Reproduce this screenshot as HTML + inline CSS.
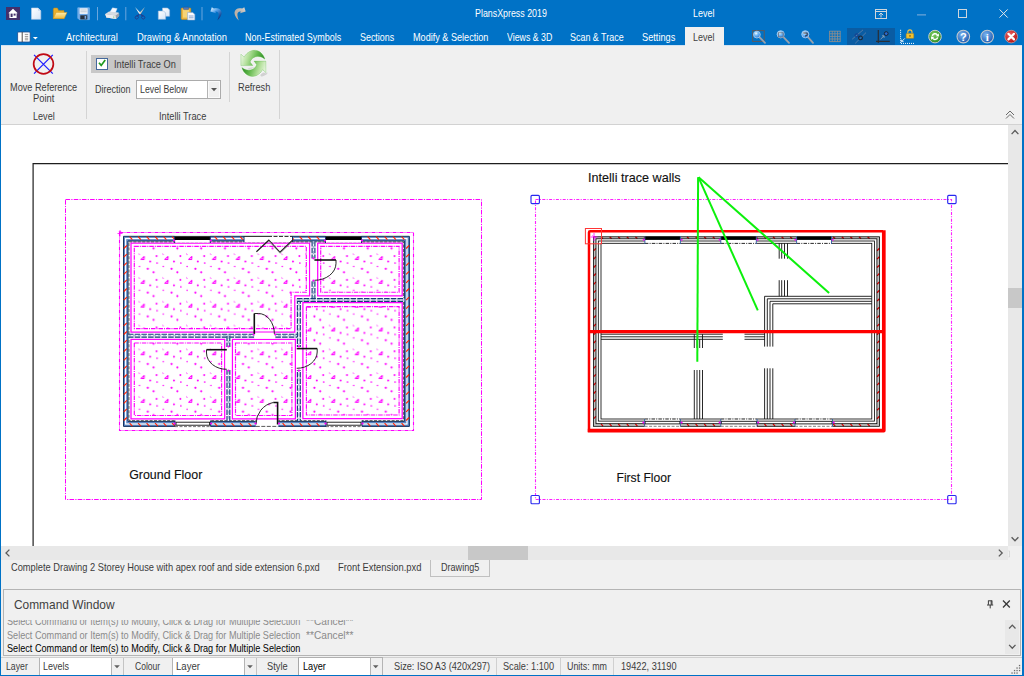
<!DOCTYPE html>
<html><head><meta charset="utf-8"><title>PlansXpress 2019</title>
<style>
html,body{margin:0;padding:0;}
body{width:1024px;height:676px;overflow:hidden;background:#f0f0f0;position:relative;font-family:"Liberation Sans", sans-serif;}
.a{position:absolute;}
.t{position:absolute;white-space:pre;transform-origin:0 0;font-family:"Liberation Sans", sans-serif;}
svg{position:absolute;left:0;top:0;overflow:visible;}
</style></head><body>
<div class="a" style="left:0px;top:0px;width:1024px;height:45px;background:#0072c6;"></div>
<div class="a" style="left:685px;top:27px;width:39px;height:18px;background:#f0f0f0;"></div>
<div class="a" style="left:847px;top:28px;width:48px;height:17px;background:#0a5ca3;"></div>
<div class="a" style="left:1px;top:45px;width:1021px;height:79px;background:#f0f0f0;"></div>
<div class="a" style="left:1px;top:124px;width:1021px;height:1px;background:#d2d2d2;"></div>
<div class="a" style="left:1px;top:44.5px;width:1021px;height:1px;background:#cfe2f3;"></div>
<div class="a" style="left:685px;top:44px;width:39px;height:2px;background:#f0f0f0;"></div>
<div class="a" style="left:86px;top:51px;width:1px;height:68px;background:#d4d4d4;"></div>
<div class="a" style="left:229px;top:52px;width:1px;height:50px;background:#d4d4d4;"></div>
<div class="a" style="left:279px;top:50px;width:1px;height:69px;background:#d4d4d4;"></div>
<div class="a" style="left:91px;top:55px;width:90px;height:18px;background:#c8c8c8;"></div>
<div class="a" style="left:96px;top:58px;width:10px;height:10px;background:#ffffff;border:1px solid #44689c;"></div>
<div class="a" style="left:136px;top:80px;width:83px;height:17px;background:#ffffff;border:1px solid #ababab;"></div>
<div class="a" style="left:207px;top:81px;width:1px;height:17px;background:#b4b4b4;"></div>
<div class="a" style="left:208px;top:81px;width:12px;height:17px;background:#f0f0f0;box-sizing:border-box;border:1px solid #fafafa;"></div>
<div class="a" style="left:1px;top:125px;width:1007px;height:421px;background:#ffffff;"></div>
<div class="a" style="left:1008px;top:125px;width:14px;height:421px;background:#e8e8e8;"></div>
<div class="a" style="left:1008px;top:288px;width:14px;height:20px;background:#c8c8c8;"></div>
<div class="a" style="left:1px;top:546px;width:1007px;height:14px;background:#e8e8e8;"></div>
<div class="a" style="left:468px;top:546px;width:60px;height:14px;background:#c8c8c8;"></div>
<div class="a" style="left:1008px;top:546px;width:14px;height:14px;background:#f0f0f0;"></div>
<div class="a" style="left:430px;top:560px;width:58px;height:16px;background:#f0f0f0;border:1px solid #c0c0c0;border-top:none;"></div>
<div class="a" style="left:3px;top:589px;width:1016px;height:64.5px;background:#f0f0f0;border:1px solid #b4b4b4;"></div>
<div class="a" style="left:1005px;top:620px;width:14px;height:34px;background:#e8e8e8;"></div>
<div class="a" style="left:1px;top:657px;width:1021px;height:1px;background:#d0d0d0;"></div>
<div class="a" style="left:39px;top:658px;width:71px;height:17px;background:#ffffff;border-left:1px solid #b4b4b4;border-right:1px solid #b4b4b4;"></div>
<div class="a" style="left:123px;top:658px;width:1px;height:17px;background:#c4c4c4;"></div>
<div class="a" style="left:172px;top:658px;width:71px;height:17px;background:#ffffff;border-left:1px solid #b4b4b4;border-right:1px solid #b4b4b4;"></div>
<div class="a" style="left:256px;top:658px;width:1px;height:17px;background:#c4c4c4;"></div>
<div class="a" style="left:298px;top:658px;width:71px;height:17px;background:#ffffff;border-left:1px solid #a8a8a8;border-right:1px solid #b4b4b4;"></div>
<div class="a" style="left:298px;top:657px;width:85px;height:1px;background:#b0b0b0;"></div>
<div class="a" style="left:382px;top:658px;width:1px;height:17px;background:#b4b4b4;"></div>
<div class="a" style="left:496px;top:658px;width:1px;height:17px;background:#d0d0d0;"></div>
<div class="a" style="left:560px;top:658px;width:1px;height:17px;background:#d0d0d0;"></div>
<div class="a" style="left:613px;top:658px;width:1px;height:17px;background:#d0d0d0;"></div>
<div class="a" style="left:0px;top:0px;width:1px;height:676px;background:#0072c6;"></div>
<div class="a" style="left:1022px;top:0px;width:2px;height:676px;background:#0072c6;"></div>
<div class="a" style="left:0px;top:674.6px;width:1024px;height:1.4px;background:#0072c6;"></div>
<svg style="left:1px;top:125px;overflow:hidden" width="1007" height="421" viewBox="1 125 1007 421">
<path d="M33.1,546 L33.1,163.6 L1008,163.6" fill="none" stroke="#1e1e1e" stroke-width="1.2"/>
<defs><pattern id="conc" x="138.4" y="253.1" width="23.8" height="23.8" patternUnits="userSpaceOnUse"><path d="M2.7,6.4 L5.7,6.4 L5.9,3.4 Z" fill="none" stroke="#ff00ff" stroke-width="1.0" stroke-linejoin="round"/><path d="M0.1,0.4 L1.3,1.8" stroke="#ff00ff" stroke-width="0.9"/><circle cx="18.2" cy="3.0" r="1.0" fill="#ff00ff"/><circle cx="11.8" cy="8.4" r="1.0" fill="#ff00ff"/><circle cx="18.7" cy="9.9" r="0.85" fill="#ff00ff"/><circle cx="1.1" cy="13.3" r="0.75" fill="#ff00ff"/><circle cx="9.4" cy="15.7" r="1.1" fill="#ff00ff"/><circle cx="15.2" cy="19.2" r="1.05" fill="#ff00ff"/></pattern></defs>
<rect x="65.5" y="199.5" width="416.0" height="300.0" fill="none" stroke="#ff00ff" stroke-width="1" stroke-dasharray="4.6 1.2 1.2 1.2"/>
<rect x="119.5" y="232.5" width="294.0" height="198.0" fill="none" stroke="#ff00ff" stroke-width="1.1" stroke-dasharray="4 1 1 1"/>
<path d="M117.5,233.5 L122.5,233.5 M120,231 L120,236.5 M119,232 L120,230.5 L121,232" stroke="#ff00ff" stroke-width="0.8" fill="none"/>
<path d="M134.3,246.4 L306.3,246.4 L306.3,292.2 L291.1,292.2 L291.1,328.6 L134.3,328.6 Z" fill="url(#conc)" stroke="#ff00ff" stroke-width="1.15" stroke-dasharray="4.5 1 1 1"/>
<path d="M131.0,243.1 L309.6,243.1 L309.6,295.9 L294.8,295.9 L294.8,332.0 L131.0,332.0 Z" fill="none" stroke="#ff00ff" stroke-width="1.25"/>
<path d="M320.7,246.4 L399.1,246.4 L399.1,292.2 L320.7,292.2 Z" fill="url(#conc)" stroke="#ff00ff" stroke-width="1.15" stroke-dasharray="4.5 1 1 1"/>
<path d="M317.7,243.1 L402.2,243.1 L402.2,295.9 L317.7,295.9 Z" fill="none" stroke="#ff00ff" stroke-width="1.25"/>
<path d="M306.4,306.6 L399.1,306.6 L399.1,415.0 L306.4,415.0 Z" fill="url(#conc)" stroke="#ff00ff" stroke-width="1.15" stroke-dasharray="4.5 1 1 1"/>
<path d="M302.9,302.7 L402.2,302.7 L402.2,418.6 L302.9,418.6 Z" fill="none" stroke="#ff00ff" stroke-width="1.25"/>
<path d="M134.3,343.0 L221.6,343.0 L221.6,415.5 L134.3,415.5 Z" fill="url(#conc)" stroke="#ff00ff" stroke-width="1.15" stroke-dasharray="4.5 1 1 1"/>
<path d="M131.0,339.3 L224.7,339.3 L224.7,418.9 L131.0,418.9 Z" fill="none" stroke="#ff00ff" stroke-width="1.25"/>
<path d="M235.5,343.0 L291.9,343.0 L291.9,415.5 L235.5,415.5 Z" fill="url(#conc)" stroke="#ff00ff" stroke-width="1.15" stroke-dasharray="4.5 1 1 1"/>
<path d="M232.4,339.3 L295.4,339.3 L295.4,418.9 L232.4,418.9 Z" fill="none" stroke="#ff00ff" stroke-width="1.25"/>
<path d="M123.5,236.3 L409.4,236.3 L409.4,426.4 L123.5,426.4 Z M128.0,241.0 L128.0,421.4 L404.4,421.4 L404.4,241.0 Z" fill="#5a85c0" fill-rule="evenodd" stroke="#15335f" stroke-width="1.0"/>
<rect x="125.6" y="238.5" width="281.4" height="185.5" fill="none" stroke="#ffffff" stroke-width="1.3"/>
<path d="M129.6,236.6 L132.4,239.6 M129.6,423.1 L132.4,426.1 M138.1,236.6 L140.9,239.6 M138.1,423.1 L140.9,426.1 M146.6,236.6 L149.4,239.6 M146.6,423.1 L149.4,426.1 M155.1,236.6 L157.9,239.6 M155.1,423.1 L157.9,426.1 M163.6,236.6 L166.4,239.6 M163.6,423.1 L166.4,426.1 M172.1,236.6 L174.9,239.6 M172.1,423.1 L174.9,426.1 M180.6,236.6 L183.4,239.6 M180.6,423.1 L183.4,426.1 M189.1,236.6 L191.9,239.6 M189.1,423.1 L191.9,426.1 M197.6,236.6 L200.4,239.6 M197.6,423.1 L200.4,426.1 M206.1,236.6 L208.9,239.6 M206.1,423.1 L208.9,426.1 M214.6,236.6 L217.4,239.6 M214.6,423.1 L217.4,426.1 M223.1,236.6 L225.9,239.6 M223.1,423.1 L225.9,426.1 M231.6,236.6 L234.4,239.6 M231.6,423.1 L234.4,426.1 M240.1,236.6 L242.9,239.6 M240.1,423.1 L242.9,426.1 M248.6,236.6 L251.4,239.6 M248.6,423.1 L251.4,426.1 M257.1,236.6 L259.9,239.6 M257.1,423.1 L259.9,426.1 M265.6,236.6 L268.4,239.6 M265.6,423.1 L268.4,426.1 M274.1,236.6 L276.9,239.6 M274.1,423.1 L276.9,426.1 M282.6,236.6 L285.4,239.6 M282.6,423.1 L285.4,426.1 M291.1,236.6 L293.9,239.6 M291.1,423.1 L293.9,426.1 M299.6,236.6 L302.4,239.6 M299.6,423.1 L302.4,426.1 M308.1,236.6 L310.9,239.6 M308.1,423.1 L310.9,426.1 M316.6,236.6 L319.4,239.6 M316.6,423.1 L319.4,426.1 M325.1,236.6 L327.9,239.6 M325.1,423.1 L327.9,426.1 M333.6,236.6 L336.4,239.6 M333.6,423.1 L336.4,426.1 M342.1,236.6 L344.9,239.6 M342.1,423.1 L344.9,426.1 M350.6,236.6 L353.4,239.6 M350.6,423.1 L353.4,426.1 M359.1,236.6 L361.9,239.6 M359.1,423.1 L361.9,426.1 M367.6,236.6 L370.4,239.6 M367.6,423.1 L370.4,426.1 M376.1,236.6 L378.9,239.6 M376.1,423.1 L378.9,426.1 M384.6,236.6 L387.4,239.6 M384.6,423.1 L387.4,426.1 M393.1,236.6 L395.9,239.6 M393.1,423.1 L395.9,426.1 M401.6,236.6 L404.4,239.6 M401.6,423.1 L404.4,426.1 M126.8,245.5 L123.8,248.5 M409.1,245.5 L406.1,248.5 M126.8,254.1 L123.8,257.1 M409.1,254.1 L406.1,257.1 M126.8,262.7 L123.8,265.7 M409.1,262.7 L406.1,265.7 M126.8,271.3 L123.8,274.3 M409.1,271.3 L406.1,274.3 M126.8,279.9 L123.8,282.9 M409.1,279.9 L406.1,282.9 M126.8,288.5 L123.8,291.5 M409.1,288.5 L406.1,291.5 M126.8,297.1 L123.8,300.1 M409.1,297.1 L406.1,300.1 M126.8,305.7 L123.8,308.7 M409.1,305.7 L406.1,308.7 M126.8,314.3 L123.8,317.3 M409.1,314.3 L406.1,317.3 M126.8,322.9 L123.8,325.9 M409.1,322.9 L406.1,325.9 M126.8,331.5 L123.8,334.5 M409.1,331.5 L406.1,334.5 M126.8,340.1 L123.8,343.1 M409.1,340.1 L406.1,343.1 M126.8,348.7 L123.8,351.7 M409.1,348.7 L406.1,351.7 M126.8,357.3 L123.8,360.3 M409.1,357.3 L406.1,360.3 M126.8,365.9 L123.8,368.9 M409.1,365.9 L406.1,368.9 M126.8,374.5 L123.8,377.5 M409.1,374.5 L406.1,377.5 M126.8,383.1 L123.8,386.1 M409.1,383.1 L406.1,386.1 M126.8,391.7 L123.8,394.7 M409.1,391.7 L406.1,394.7 M126.8,400.3 L123.8,403.3 M409.1,400.3 L406.1,403.3 M126.8,408.9 L123.8,411.9 M409.1,408.9 L406.1,411.9 M126.8,417.5 L123.8,420.5 M409.1,417.5 L406.1,420.5" stroke="#ff2200" stroke-width="1.15" fill="none"/>
<rect x="129.0" y="241.9" width="274.5" height="178.6" fill="none" stroke="#303030" stroke-width="0.7" stroke-dasharray="3 1.4"/>
<line x1="128.0" y1="335.7" x2="300.8" y2="335.7" stroke="#eef2f8" stroke-width="3.4"/><line x1="128.0" y1="335.7" x2="300.8" y2="335.7" stroke="#9fb6d2" stroke-width="1.0" stroke-dasharray="3 2"/><line x1="128.0" y1="337.1" x2="300.8" y2="337.1" stroke="#163c78" stroke-width="1.15" stroke-dasharray="5.5 1.2"/><line x1="128.0" y1="334.2" x2="300.8" y2="334.2" stroke="#163c78" stroke-width="1.15" stroke-dasharray="5.5 1.2"/>
<line x1="228.4" y1="335.7" x2="228.4" y2="421.0" stroke="#eef2f8" stroke-width="3.4"/><line x1="228.4" y1="335.7" x2="228.4" y2="421.0" stroke="#9fb6d2" stroke-width="1.0" stroke-dasharray="3 2"/><line x1="227.0" y1="335.7" x2="227.0" y2="421.0" stroke="#163c78" stroke-width="1.15" stroke-dasharray="5.5 1.2"/><line x1="229.8" y1="335.7" x2="229.8" y2="421.0" stroke="#163c78" stroke-width="1.15" stroke-dasharray="5.5 1.2"/>
<line x1="298.9" y1="298.2" x2="298.9" y2="421.0" stroke="#eef2f8" stroke-width="3.4"/><line x1="298.9" y1="298.2" x2="298.9" y2="421.0" stroke="#9fb6d2" stroke-width="1.0" stroke-dasharray="3 2"/><line x1="297.4" y1="298.2" x2="297.4" y2="421.0" stroke="#163c78" stroke-width="1.15" stroke-dasharray="5.5 1.2"/><line x1="300.3" y1="298.2" x2="300.3" y2="421.0" stroke="#163c78" stroke-width="1.15" stroke-dasharray="5.5 1.2"/>
<line x1="313.5" y1="241.0" x2="313.5" y2="300.0" stroke="#eef2f8" stroke-width="3.4"/><line x1="313.5" y1="241.0" x2="313.5" y2="300.0" stroke="#9fb6d2" stroke-width="1.0" stroke-dasharray="3 2"/><line x1="312.1" y1="241.0" x2="312.1" y2="300.0" stroke="#163c78" stroke-width="1.15" stroke-dasharray="5.5 1.2"/><line x1="314.9" y1="241.0" x2="314.9" y2="300.0" stroke="#163c78" stroke-width="1.15" stroke-dasharray="5.5 1.2"/>
<line x1="297.0" y1="300.0" x2="404.4" y2="300.0" stroke="#eef2f8" stroke-width="3.4"/><line x1="297.0" y1="300.0" x2="404.4" y2="300.0" stroke="#9fb6d2" stroke-width="1.0" stroke-dasharray="3 2"/><line x1="297.0" y1="301.4" x2="404.4" y2="301.4" stroke="#163c78" stroke-width="1.15" stroke-dasharray="5.5 1.2"/><line x1="297.0" y1="298.6" x2="404.4" y2="298.6" stroke="#163c78" stroke-width="1.15" stroke-dasharray="5.5 1.2"/>
<rect x="244.0" y="235.5" width="48.5" height="6.7" fill="#ffffff"/>
<line x1="244.0" y1="236.4" x2="268.0" y2="236.4" stroke="#222" stroke-width="1"/>
<line x1="268.0" y1="236.4" x2="292.5" y2="236.4" stroke="#222" stroke-width="1" stroke-dasharray="4 1.5"/>
<line x1="244.0" y1="236.0" x2="244.0" y2="242.0" stroke="#15335f" stroke-width="1"/>
<line x1="292.5" y1="236.0" x2="292.5" y2="242.0" stroke="#15335f" stroke-width="1"/>
<path d="M256.4,251.7 L268.8,240.2 L280,252.3 L292.5,240.2" fill="none" stroke="#222" stroke-width="1.2"/>
<path d="M269.5,241.5 L280,253.3 L292,241.8" fill="none" stroke="#999" stroke-width="0.8"/>
<rect x="174.6" y="235.5" width="35.7" height="7.0" fill="#ffffff"/>
<rect x="174.6" y="236.2" width="35.7" height="3.8" fill="#000000"/>
<line x1="174.6" y1="236.0" x2="174.6" y2="243.0" stroke="#15335f" stroke-width="1"/>
<line x1="210.3" y1="236.0" x2="210.3" y2="243.0" stroke="#15335f" stroke-width="1"/>
<rect x="325.5" y="235.5" width="36.0" height="7.0" fill="#ffffff"/>
<rect x="325.5" y="236.2" width="36.0" height="3.8" fill="#000000"/>
<line x1="325.5" y1="236.0" x2="325.5" y2="243.0" stroke="#15335f" stroke-width="1"/>
<line x1="361.5" y1="236.0" x2="361.5" y2="243.0" stroke="#15335f" stroke-width="1"/>
<rect x="175.0" y="420.0" width="35.6" height="7.0" fill="#ffffff"/>
<rect x="176.0" y="422.2" width="33.6" height="3.0" fill="#ffffff" stroke="#111" stroke-width="0.9"/>
<line x1="175.0" y1="426.6" x2="210.6" y2="426.6" stroke="#555" stroke-width="0.8" stroke-dasharray="3 1.5"/>
<line x1="175.0" y1="420.5" x2="175.0" y2="426.5" stroke="#15335f" stroke-width="1"/>
<line x1="210.6" y1="420.5" x2="210.6" y2="426.5" stroke="#15335f" stroke-width="1"/>
<circle cx="174.5" cy="423.5" r="1.1" fill="#ff00ff"/><circle cx="211.1" cy="423.5" r="1.1" fill="#ff00ff"/>
<rect x="326.0" y="420.0" width="36.0" height="7.0" fill="#ffffff"/>
<rect x="327.0" y="422.2" width="34.0" height="3.0" fill="#ffffff" stroke="#111" stroke-width="0.9"/>
<line x1="326.0" y1="426.6" x2="362.0" y2="426.6" stroke="#555" stroke-width="0.8" stroke-dasharray="3 1.5"/>
<line x1="326.0" y1="420.5" x2="326.0" y2="426.5" stroke="#15335f" stroke-width="1"/>
<line x1="362.0" y1="420.5" x2="362.0" y2="426.5" stroke="#15335f" stroke-width="1"/>
<circle cx="325.5" cy="423.5" r="1.1" fill="#ff00ff"/><circle cx="362.5" cy="423.5" r="1.1" fill="#ff00ff"/>
<rect x="255.8" y="420.0" width="22.5" height="7.2" fill="#ffffff"/>
<line x1="255.8" y1="426.4" x2="278.0" y2="426.4" stroke="#444" stroke-width="0.9" stroke-dasharray="4 1.5"/>
<path d="M277.6,424.5 L277.6,402.5 L273.3,402.5" fill="none" stroke="#111" stroke-width="1.6"/>
<path d="M273.3,402.5 A21.5,22 0 0 0 256,424.5" fill="none" stroke="#111" stroke-width="0.9"/>
<rect x="254.5" y="332.7" width="20.5" height="6.0" fill="#ffffff"/>
<line x1="254.3" y1="334.0" x2="254.3" y2="313.5" stroke="#111" stroke-width="1.6"/>
<path d="M254.3,313.5 L258.5,313.5 A16,20.5 0 0 1 274.4,334" fill="none" stroke="#111" stroke-width="0.9"/>
<rect x="310.5" y="258.5" width="6.0" height="21.5" fill="#ffffff"/>
<line x1="314.4" y1="260.0" x2="336.0" y2="260.0" stroke="#111" stroke-width="1.6"/>
<path d="M336,260 L336,263.5 A21.5,17 0 0 1 314.4,280.3" fill="none" stroke="#111" stroke-width="0.9"/>
<rect x="225.5" y="347.0" width="5.8" height="23.0" fill="#ffffff"/>
<line x1="206.5" y1="349.7" x2="226.8" y2="349.7" stroke="#111" stroke-width="1.6"/>
<path d="M206.5,349.7 L206.5,353 A20,16.5 0 0 0 226.8,369.3" fill="none" stroke="#111" stroke-width="0.9"/>
<rect x="296.0" y="347.0" width="5.8" height="23.0" fill="#ffffff"/>
<line x1="296.7" y1="348.6" x2="317.2" y2="348.6" stroke="#111" stroke-width="1.6"/>
<path d="M317.2,348.6 L317.2,352 A20.5,16.5 0 0 1 296.7,368.3" fill="none" stroke="#111" stroke-width="0.9"/>
<circle cx="253.6" cy="334.5" r="1.1" fill="#ff00ff"/>
<circle cx="275.2" cy="334.5" r="1.1" fill="#ff00ff"/>
<circle cx="313.4" cy="258.3" r="1.1" fill="#ff00ff"/>
<circle cx="313.4" cy="280.6" r="1.1" fill="#ff00ff"/>
<circle cx="228.4" cy="346.5" r="1.1" fill="#ff00ff"/>
<circle cx="228.4" cy="370.6" r="1.1" fill="#ff00ff"/>
<circle cx="298.9" cy="346.5" r="1.1" fill="#ff00ff"/>
<circle cx="298.9" cy="370.6" r="1.1" fill="#ff00ff"/>
<circle cx="255.5" cy="423.5" r="1.1" fill="#ff00ff"/>
<circle cx="279" cy="423.5" r="1.1" fill="#ff00ff"/>
<circle cx="174.1" cy="240.5" r="1.1" fill="#ff00ff"/>
<circle cx="210.8" cy="240.5" r="1.1" fill="#ff00ff"/>
<circle cx="325" cy="240.5" r="1.1" fill="#ff00ff"/>
<circle cx="362" cy="240.5" r="1.1" fill="#ff00ff"/>
<rect x="535.5" y="199.5" width="416.0" height="300.0" fill="none" stroke="#ff20ff" stroke-width="1.1" stroke-dasharray="3 1.4 1 1.4"/>
<path d="M593.6,236.8 L879.6,236.8 L879.6,426.3 L593.6,426.3 Z M596.0,238.8 L596.0,423.7 L876.9,423.7 L876.9,238.8 Z" fill="#c2c2c2" fill-rule="evenodd"/>
<path d="M601.0,237.0 L603.0,238.6 M601.0,423.9 L603.0,426.1 M609.6,237.0 L611.6,238.6 M609.6,423.9 L611.6,426.1 M618.2,237.0 L620.2,238.6 M618.2,423.9 L620.2,426.1 M626.8,237.0 L628.8,238.6 M626.8,423.9 L628.8,426.1 M635.4,237.0 L637.4,238.6 M635.4,423.9 L637.4,426.1 M644.0,237.0 L646.0,238.6 M644.0,423.9 L646.0,426.1 M652.6,237.0 L654.6,238.6 M652.6,423.9 L654.6,426.1 M661.2,237.0 L663.2,238.6 M661.2,423.9 L663.2,426.1 M669.8,237.0 L671.8,238.6 M669.8,423.9 L671.8,426.1 M678.4,237.0 L680.4,238.6 M678.4,423.9 L680.4,426.1 M687.0,237.0 L689.0,238.6 M687.0,423.9 L689.0,426.1 M695.6,237.0 L697.6,238.6 M695.6,423.9 L697.6,426.1 M704.2,237.0 L706.2,238.6 M704.2,423.9 L706.2,426.1 M712.8,237.0 L714.8,238.6 M712.8,423.9 L714.8,426.1 M721.4,237.0 L723.4,238.6 M721.4,423.9 L723.4,426.1 M730.0,237.0 L732.0,238.6 M730.0,423.9 L732.0,426.1 M738.6,237.0 L740.6,238.6 M738.6,423.9 L740.6,426.1 M747.2,237.0 L749.2,238.6 M747.2,423.9 L749.2,426.1 M755.8,237.0 L757.8,238.6 M755.8,423.9 L757.8,426.1 M764.4,237.0 L766.4,238.6 M764.4,423.9 L766.4,426.1 M773.0,237.0 L775.0,238.6 M773.0,423.9 L775.0,426.1 M781.6,237.0 L783.6,238.6 M781.6,423.9 L783.6,426.1 M790.2,237.0 L792.2,238.6 M790.2,423.9 L792.2,426.1 M798.8,237.0 L800.8,238.6 M798.8,423.9 L800.8,426.1 M807.4,237.0 L809.4,238.6 M807.4,423.9 L809.4,426.1 M816.0,237.0 L818.0,238.6 M816.0,423.9 L818.0,426.1 M824.6,237.0 L826.6,238.6 M824.6,423.9 L826.6,426.1 M833.2,237.0 L835.2,238.6 M833.2,423.9 L835.2,426.1 M841.8,237.0 L843.8,238.6 M841.8,423.9 L843.8,426.1 M850.4,237.0 L852.4,238.6 M850.4,423.9 L852.4,426.1 M859.0,237.0 L861.0,238.6 M859.0,423.9 L861.0,426.1 M867.6,237.0 L869.6,238.6 M867.6,423.9 L869.6,426.1 M595.8,248.3 L593.8,250.7 M879.4,248.3 L877.1,250.7 M595.8,256.7 L593.8,259.1 M879.4,256.7 L877.1,259.1 M595.8,265.1 L593.8,267.5 M879.4,265.1 L877.1,267.5 M595.8,273.5 L593.8,275.9 M879.4,273.5 L877.1,275.9 M595.8,281.9 L593.8,284.3 M879.4,281.9 L877.1,284.3 M595.8,290.3 L593.8,292.7 M879.4,290.3 L877.1,292.7 M595.8,298.7 L593.8,301.1 M879.4,298.7 L877.1,301.1 M595.8,307.1 L593.8,309.5 M879.4,307.1 L877.1,309.5 M595.8,315.5 L593.8,317.9 M879.4,315.5 L877.1,317.9 M595.8,323.9 L593.8,326.3 M879.4,323.9 L877.1,326.3 M595.8,332.3 L593.8,334.7 M879.4,332.3 L877.1,334.7 M595.8,340.7 L593.8,343.1 M879.4,340.7 L877.1,343.1 M595.8,349.1 L593.8,351.5 M879.4,349.1 L877.1,351.5 M595.8,357.5 L593.8,359.9 M879.4,357.5 L877.1,359.9 M595.8,365.9 L593.8,368.3 M879.4,365.9 L877.1,368.3 M595.8,374.3 L593.8,376.7 M879.4,374.3 L877.1,376.7 M595.8,382.7 L593.8,385.1 M879.4,382.7 L877.1,385.1 M595.8,391.1 L593.8,393.5 M879.4,391.1 L877.1,393.5 M595.8,399.5 L593.8,401.9 M879.4,399.5 L877.1,401.9 M595.8,407.9 L593.8,410.3 M879.4,407.9 L877.1,410.3 M595.8,416.3 L593.8,418.7 M879.4,416.3 L877.1,418.7" stroke="#e00000" stroke-width="1.3" fill="none"/>
<rect x="593.6" y="236.8" width="286.0" height="189.5" fill="none" stroke="#000" stroke-width="0.8"/>
<rect x="596.0" y="238.8" width="280.9" height="184.9" fill="none" stroke="#000" stroke-width="0.8"/>
<rect x="598.3" y="241.0" width="276.3" height="180.1" fill="none" stroke="#000" stroke-width="0.8"/>
<rect x="601.0" y="243.3" width="270.8" height="175.7" fill="none" stroke="#000" stroke-width="0.8"/>
<rect x="644.9" y="235.8" width="35.5" height="8.4" fill="#ffffff"/>
<rect x="644.9" y="236.2" width="35.5" height="3.7" fill="#000000"/>
<line x1="644.9" y1="243.4" x2="680.4" y2="243.4" stroke="#111111" stroke-width="0.9" stroke-dasharray="3.5 1.2 1 1.2"/>
<line x1="644.9" y1="236.0" x2="644.9" y2="244.0" stroke="#2a5aa0" stroke-width="0.9"/>
<line x1="680.4" y1="236.0" x2="680.4" y2="244.0" stroke="#2a5aa0" stroke-width="0.9"/>
<circle cx="643.6999999999999" cy="239.8" r="1" fill="#ff00ff"/><circle cx="681.6" cy="239.8" r="1" fill="#ff00ff"/>
<rect x="720.8" y="235.8" width="35.5" height="8.4" fill="#ffffff"/>
<rect x="720.8" y="236.2" width="35.5" height="3.7" fill="#000000"/>
<line x1="720.8" y1="243.4" x2="756.3" y2="243.4" stroke="#111111" stroke-width="0.9" stroke-dasharray="3.5 1.2 1 1.2"/>
<line x1="720.8" y1="236.0" x2="720.8" y2="244.0" stroke="#2a5aa0" stroke-width="0.9"/>
<line x1="756.3" y1="236.0" x2="756.3" y2="244.0" stroke="#2a5aa0" stroke-width="0.9"/>
<circle cx="719.5999999999999" cy="239.8" r="1" fill="#ff00ff"/><circle cx="757.5" cy="239.8" r="1" fill="#ff00ff"/>
<rect x="796.6" y="235.8" width="34.9" height="8.4" fill="#ffffff"/>
<rect x="796.6" y="236.2" width="34.9" height="3.7" fill="#000000"/>
<line x1="796.6" y1="243.4" x2="831.5" y2="243.4" stroke="#111111" stroke-width="0.9" stroke-dasharray="3.5 1.2 1 1.2"/>
<line x1="796.6" y1="236.0" x2="796.6" y2="244.0" stroke="#2a5aa0" stroke-width="0.9"/>
<line x1="831.5" y1="236.0" x2="831.5" y2="244.0" stroke="#2a5aa0" stroke-width="0.9"/>
<circle cx="795.4" cy="239.8" r="1" fill="#ff00ff"/><circle cx="832.7" cy="239.8" r="1" fill="#ff00ff"/>
<rect x="644.6" y="418.2" width="35.8" height="8.8" fill="#ffffff"/>
<line x1="644.6" y1="419.0" x2="680.4" y2="419.0" stroke="#111111" stroke-width="0.9" stroke-dasharray="3.5 1.2 1 1.2"/>
<rect x="645.1" y="421.3" width="34.8" height="2.6" fill="#ffffff" stroke="#111111" stroke-width="0.9"/>
<line x1="644.6" y1="426.3" x2="680.4" y2="426.3" stroke="#666" stroke-width="0.8" stroke-dasharray="3 1.5"/>
<line x1="644.6" y1="419.0" x2="644.6" y2="426.5" stroke="#2a5aa0" stroke-width="0.9"/>
<line x1="680.4" y1="419.0" x2="680.4" y2="426.5" stroke="#2a5aa0" stroke-width="0.9"/>
<circle cx="643.4" cy="422.6" r="1" fill="#ff00ff"/><circle cx="681.6" cy="422.6" r="1" fill="#ff00ff"/>
<rect x="720.8" y="418.2" width="36.2" height="8.8" fill="#ffffff"/>
<line x1="720.8" y1="419.0" x2="757.0" y2="419.0" stroke="#111111" stroke-width="0.9" stroke-dasharray="3.5 1.2 1 1.2"/>
<rect x="721.3" y="421.3" width="35.2" height="2.6" fill="#ffffff" stroke="#111111" stroke-width="0.9"/>
<line x1="720.8" y1="426.3" x2="757.0" y2="426.3" stroke="#666" stroke-width="0.8" stroke-dasharray="3 1.5"/>
<line x1="720.8" y1="419.0" x2="720.8" y2="426.5" stroke="#2a5aa0" stroke-width="0.9"/>
<line x1="757.0" y1="419.0" x2="757.0" y2="426.5" stroke="#2a5aa0" stroke-width="0.9"/>
<circle cx="719.5999999999999" cy="422.6" r="1" fill="#ff00ff"/><circle cx="758.2" cy="422.6" r="1" fill="#ff00ff"/>
<rect x="795.0" y="418.2" width="37.5" height="8.8" fill="#ffffff"/>
<line x1="795.0" y1="419.0" x2="832.5" y2="419.0" stroke="#111111" stroke-width="0.9" stroke-dasharray="3.5 1.2 1 1.2"/>
<rect x="795.5" y="421.3" width="36.5" height="2.6" fill="#ffffff" stroke="#111111" stroke-width="0.9"/>
<line x1="795.0" y1="426.3" x2="832.5" y2="426.3" stroke="#666" stroke-width="0.8" stroke-dasharray="3 1.5"/>
<line x1="795.0" y1="419.0" x2="795.0" y2="426.5" stroke="#2a5aa0" stroke-width="0.9"/>
<line x1="832.5" y1="419.0" x2="832.5" y2="426.5" stroke="#2a5aa0" stroke-width="0.9"/>
<circle cx="793.8" cy="422.6" r="1" fill="#ff00ff"/><circle cx="833.7" cy="422.6" r="1" fill="#ff00ff"/>
<line x1="779.2" y1="243.3" x2="779.2" y2="258.7" stroke="#111111" stroke-width="0.9"/>
<line x1="779.2" y1="280.2" x2="779.2" y2="296.3" stroke="#111111" stroke-width="0.9"/>
<line x1="781.7" y1="243.3" x2="781.7" y2="258.7" stroke="#111111" stroke-width="0.9"/>
<line x1="781.7" y1="280.2" x2="781.7" y2="296.3" stroke="#111111" stroke-width="0.9"/>
<line x1="784.5" y1="243.3" x2="784.5" y2="258.7" stroke="#111111" stroke-width="0.9"/>
<line x1="784.5" y1="280.2" x2="784.5" y2="296.3" stroke="#111111" stroke-width="0.9"/>
<line x1="787.5" y1="243.3" x2="787.5" y2="258.7" stroke="#111111" stroke-width="0.9"/>
<line x1="787.5" y1="280.2" x2="787.5" y2="296.3" stroke="#111111" stroke-width="0.9"/>
<path d="M764.6,346.6 L764.6,296.3 L871.8,296.3" fill="none" stroke="#111111" stroke-width="0.9"/>
<line x1="764.6" y1="368.3" x2="764.6" y2="419.0" stroke="#111111" stroke-width="0.9"/>
<path d="M767.3,346.6 L767.3,298.8 L871.8,298.8" fill="none" stroke="#111111" stroke-width="0.9"/>
<line x1="767.3" y1="368.3" x2="767.3" y2="419.0" stroke="#111111" stroke-width="0.9"/>
<path d="M770.0,346.6 L770.0,301.3 L871.8,301.3" fill="none" stroke="#111111" stroke-width="0.9"/>
<line x1="770.0" y1="368.3" x2="770.0" y2="419.0" stroke="#111111" stroke-width="0.9"/>
<path d="M772.8,346.6 L772.8,303.8 L871.8,303.8" fill="none" stroke="#111111" stroke-width="0.9"/>
<line x1="772.8" y1="368.3" x2="772.8" y2="419.0" stroke="#111111" stroke-width="0.9"/>
<line x1="601.0" y1="334.2" x2="722.8" y2="334.2" stroke="#111111" stroke-width="0.9"/>
<line x1="744.5" y1="334.2" x2="765.0" y2="334.2" stroke="#111111" stroke-width="0.9"/>
<line x1="601.0" y1="336.8" x2="722.8" y2="336.8" stroke="#111111" stroke-width="0.9"/>
<line x1="744.5" y1="336.8" x2="765.0" y2="336.8" stroke="#111111" stroke-width="0.9"/>
<line x1="601.0" y1="339.3" x2="722.8" y2="339.3" stroke="#111111" stroke-width="0.9"/>
<line x1="744.5" y1="339.3" x2="765.0" y2="339.3" stroke="#111111" stroke-width="0.9"/>
<line x1="694.3" y1="334.2" x2="694.3" y2="348.0" stroke="#111111" stroke-width="0.9"/>
<line x1="694.3" y1="370.0" x2="694.3" y2="419.0" stroke="#111111" stroke-width="0.9"/>
<line x1="697.0" y1="339.3" x2="697.0" y2="348.0" stroke="#111111" stroke-width="0.9"/>
<line x1="697.0" y1="370.0" x2="697.0" y2="419.0" stroke="#111111" stroke-width="0.9"/>
<line x1="699.7" y1="339.3" x2="699.7" y2="348.0" stroke="#111111" stroke-width="0.9"/>
<line x1="699.7" y1="370.0" x2="699.7" y2="419.0" stroke="#111111" stroke-width="0.9"/>
<line x1="702.5" y1="334.2" x2="702.5" y2="348.0" stroke="#111111" stroke-width="0.9"/>
<line x1="702.5" y1="370.0" x2="702.5" y2="419.0" stroke="#111111" stroke-width="0.9"/>
<path d="M589,432 L589,232.4 Q589,231.2 590.2,231.2 L883,231.2" fill="none" stroke="#ff0000" stroke-width="2.5"/>
<path d="M883.8,230.2 L883.8,430.6 L587.8,430.6" fill="none" stroke="#ff0000" stroke-width="3.7" stroke-linejoin="round"/>
<line x1="589.0" y1="331.6" x2="884.0" y2="331.6" stroke="#ff0000" stroke-width="3.1"/>
<rect x="585.4" y="228.5" width="16.1" height="15.3" fill="none" stroke="#ff3535" stroke-width="1"/>
<path d="M590.5,237 L597.5,237 M594,233 L594,241 M592.5,235.5 L595.5,238.5" stroke="#ff00ff" stroke-width="0.8" fill="none"/>
<line x1="698.1" y1="177.2" x2="697.3" y2="361.8" stroke="#0cf00c" stroke-width="2"/>
<line x1="698.4" y1="177.2" x2="757.8" y2="310.4" stroke="#0cf00c" stroke-width="2"/>
<line x1="698.6" y1="177.2" x2="829.1" y2="292.9" stroke="#0cf00c" stroke-width="2"/>
<rect x="531.0" y="195.4" width="8.4" height="8.2" fill="none" stroke="#2828f0" stroke-width="1.15" rx="1"/>
<rect x="947.7" y="195.4" width="8.4" height="8.2" fill="none" stroke="#2828f0" stroke-width="1.15" rx="1"/>
<rect x="531.0" y="495.5" width="8.4" height="8.2" fill="none" stroke="#2828f0" stroke-width="1.15" rx="1"/>
<rect x="947.7" y="495.5" width="8.4" height="8.2" fill="none" stroke="#2828f0" stroke-width="1.15" rx="1"/>
<text x="588" y="181.9" font-family="Liberation Sans, sans-serif" font-size="12.2" textLength="92.6" lengthAdjust="spacingAndGlyphs" fill="#111" stroke="#111" stroke-width="0.12">Intelli trace walls</text>
<text x="129.2" y="479.2" font-family="Liberation Sans, sans-serif" font-size="12.4" textLength="73.1" lengthAdjust="spacingAndGlyphs" fill="#111" stroke="#111" stroke-width="0.12">Ground Floor</text>
<text x="616.5" y="481.7" font-family="Liberation Sans, sans-serif" font-size="12.2" textLength="54.5" lengthAdjust="spacingAndGlyphs" fill="#111" stroke="#111" stroke-width="0.12">First Floor</text>
</svg>
<svg width="1024" height="676" viewBox="0 0 1024 676">
<defs>
<linearGradient id="gfold" x1="0" y1="0" x2="0" y2="1"><stop offset="0" stop-color="#fff0b0"/><stop offset="1" stop-color="#f0b838"/></linearGradient>
<linearGradient id="gpage" x1="0" y1="0" x2="1" y2="1"><stop offset="0" stop-color="#ffffff"/><stop offset="1" stop-color="#d6e6f8"/></linearGradient>
<linearGradient id="ggreen" x1="0" y1="0" x2="1" y2="1"><stop offset="0" stop-color="#d8f0c4"/><stop offset="0.45" stop-color="#8fcf70"/><stop offset="1" stop-color="#2f9428"/></linearGradient>
<linearGradient id="ggreen2" x1="1" y1="1" x2="0" y2="0"><stop offset="0" stop-color="#d8f0c4"/><stop offset="0.45" stop-color="#8fcf70"/><stop offset="1" stop-color="#2f9428"/></linearGradient>
<radialGradient id="gblue" cx="0.4" cy="0.35" r="0.7"><stop offset="0" stop-color="#7ab4f0"/><stop offset="1" stop-color="#1a58b0"/></radialGradient>
<radialGradient id="gred" cx="0.4" cy="0.35" r="0.7"><stop offset="0" stop-color="#f06060"/><stop offset="1" stop-color="#b01010"/></radialGradient>
<radialGradient id="ggrn" cx="0.4" cy="0.35" r="0.7"><stop offset="0" stop-color="#7fd060"/><stop offset="1" stop-color="#2a8a22"/></radialGradient>
<radialGradient id="glens" cx="0.38" cy="0.32" r="0.75"><stop offset="0" stop-color="#ffffff"/><stop offset="0.35" stop-color="#7cc0f8"/><stop offset="1" stop-color="#1d6fd6"/></radialGradient>
</defs>
<rect x="6" y="7" width="14" height="13" fill="#43306b"/>
<path d="M8.3,13.2 L13,8.8 L17.7,13.2 L16.6,13.2 L16.6,18 L9.4,18 L9.4,13.2 Z" fill="#ffffff"/>
<rect x="10.6" y="13.6" width="2" height="3.4" fill="#43306b"/><rect x="13.6" y="13.6" width="2" height="2" fill="#43306b"/>
<path d="M31.5,8 L38,8 L40.8,10.8 L40.8,19.3 L31.5,19.3 Z" fill="url(#gpage)" stroke="#b8cde6" stroke-width="0.6"/>
<path d="M38,8 L38,10.8 L40.8,10.8 Z" fill="#c8daf0"/>
<path d="M53.3,9 L53.3,18.5 L64,18.5 L64,10.6 L58.6,10.6 L57.4,8 L54,8 Z" fill="#e8ae2c" stroke="#c08a18" stroke-width="0.5"/>
<path d="M53.3,18.6 L56.2,12.4 L67,12.4 L64.2,18.6 Z" fill="url(#gfold)" stroke="#d69a1c" stroke-width="0.5"/>
<path d="M77.8,7.8 L89.4,7.8 L89.4,19.6 L79.2,19.6 L77.8,18.2 Z" fill="#6ea8e6" stroke="#8fc0f0" stroke-width="0.6"/>
<rect x="79.6" y="8.3" width="8" height="5.6" fill="#f4f6fa"/>
<path d="M80.4,10 L86.8,10 M80.4,11.8 L86.8,11.8" stroke="#a8b4c4" stroke-width="0.7"/>
<rect x="80.3" y="15.3" width="7" height="4.1" fill="#26303e"/><rect x="84.6" y="16" width="1.6" height="2.8" fill="#7aa8e0"/>
<rect x="97" y="7" width="1" height="13.3" fill="#6aa6de"/>
<rect x="125.3" y="7" width="1" height="13.3" fill="#6aa6de"/>
<rect x="201.5" y="7" width="1" height="13.3" fill="#6aa6de"/>
<path d="M109.5,12.5 L112.5,7.8 L117.2,8.6 L115.5,12.8 Z" fill="#f4f8ff" stroke="#b0c4de" stroke-width="0.4"/>
<path d="M105.2,14 L109,11.6 L118.6,12.6 L119.2,15.8 L116,18.9 L106.4,17.6 Z" fill="#d8dce2"/>
<path d="M105.2,14 L115.6,15.4 L119.2,12.9 L119.2,15.8 L116,18.9 L106.4,17.6 Z" fill="#9a9ea8"/>
<path d="M105.2,14 L115.6,15.4 L116,18.9 L106.4,17.6 Z" fill="#eceef2"/>
<circle cx="113.8" cy="17" r="0.6" fill="#60c040"/>
<path d="M135,6.9 L140.9,13.2 L139.6,14.6 Z" fill="#f2f0ec"/>
<path d="M144.9,6.9 L139.1,13.2 L140.4,14.6 Z" fill="#cfc8c0"/>
<path d="M140.6,14.2 L143.2,16.2 M139.4,14.2 L136.8,16.2" stroke="#203c8c" stroke-width="1.1"/>
<ellipse cx="143.2" cy="17.4" rx="1.7" ry="1.5" fill="none" stroke="#203c8c" stroke-width="0.9" transform="rotate(35 143.2 17.4)"/>
<ellipse cx="136.8" cy="17.4" rx="1.7" ry="1.5" fill="none" stroke="#203c8c" stroke-width="0.9" transform="rotate(-35 136.8 17.4)"/>
<path d="M162.5,8 L167.6,8 L169.6,10 L169.6,16.3 L162.5,16.3 Z" fill="url(#gpage)" stroke="#9db8da" stroke-width="0.6"/>
<path d="M158.3,11 L163.6,11 L165.6,13 L165.6,19.3 L158.3,19.3 Z" fill="url(#gpage)" stroke="#9db8da" stroke-width="0.6"/>
<rect x="181.2" y="8" width="9.6" height="11.4" rx="0.8" fill="#eeb840" stroke="#c88a18" stroke-width="0.6"/>
<rect x="183" y="9.6" width="6" height="8" fill="#f6d478"/>
<rect x="183.4" y="7.2" width="5.4" height="2.4" rx="0.8" fill="#4a78c0" stroke="#2a4a8a" stroke-width="0.4"/>
<path d="M187.6,12.4 L192.8,12.4 L194.8,14.4 L194.8,20 L187.6,20 Z" fill="#f8fbff" stroke="#8aa8d0" stroke-width="0.6"/>
<path d="M188.8,16 L193.6,16 M188.8,17.8 L193.6,17.8" stroke="#6a90c8" stroke-width="0.8"/>
<linearGradient id="gundo" gradientUnits="userSpaceOnUse" x1="211" y1="8" x2="220" y2="19"><stop offset="0" stop-color="#dcf0ff"/><stop offset="0.4" stop-color="#4c9ce8"/><stop offset="1" stop-color="#062a78"/></linearGradient>
<linearGradient id="gredo" gradientUnits="userSpaceOnUse" x1="211" y1="8" x2="220" y2="19"><stop offset="0" stop-color="#d6d2ce"/><stop offset="0.5" stop-color="#b8b2ac"/><stop offset="1" stop-color="#c8b098"/></linearGradient>
<path d="M211.8,7.2 L210.4,11.5 L216,13.3 L215.3,11.5 C217.4,11.2 218.9,12.6 218.7,15 C218.5,17 218,19 217.2,20.4 C220,18.2 222,14.6 221.5,12 C220.9,9 218,7.5 213.9,8.6 Z" fill="url(#gundo)"/>
<path d="M211.8,7.2 L210.4,11.5 L216,13.3 L215.3,11.5 C217.4,11.2 218.9,12.6 218.7,15 C218.5,17 218,19 217.2,20.4 C220,18.2 222,14.6 221.5,12 C220.9,9 218,7.5 213.9,8.6 Z" fill="url(#gredo)" transform="translate(456.1,0) scale(-1,1)"/>
<rect x="17.6" y="32" width="12.6" height="10" rx="1" fill="#ffffff" stroke="#1c4a8c" stroke-width="0.8"/>
<rect x="21.7" y="32" width="1" height="10" fill="#4a4a4a"/>
<path d="M24.8,34.4 L28.2,34.4 M24.8,36.4 L28.2,36.4 M24.8,38.2 L28.2,38.2 M24.8,39.8 L28.2,39.8" stroke="#8a8a8a" stroke-width="0.9"/>
<path d="M32.9,37 L37.8,37 L35.35,39.5 Z" fill="#ffffff"/>
<path d="M34.05,54.9 L52.8,73.6 M52.8,54.9 L34.05,73.6" stroke="#1c1cff" stroke-width="1.25"/>
<circle cx="43.5" cy="64" r="9.85" fill="none" stroke="#c00a14" stroke-width="1.7"/>
<path d="M99,62.8 L101.2,65.4 L105.2,60" fill="none" stroke="#1f9a1f" stroke-width="1.7"/>
<path d="M211,88 L217,88 L214,91.2 Z" fill="#555555"/>
<linearGradient id="grf" x1="0" y1="0.35" x2="1" y2="0.55"><stop offset="0" stop-color="#ecf8e4"/><stop offset="0.3" stop-color="#b4e09c"/><stop offset="0.65" stop-color="#62b84c"/><stop offset="1" stop-color="#2a8a22"/></linearGradient><g transform="translate(230,46) scale(0.0503)"><ellipse cx="420" cy="450" rx="90" ry="24" fill="#000" opacity="0.10" transform="rotate(-15 420 450)"/><ellipse cx="675" cy="560" rx="75" ry="30" fill="#000" opacity="0.13" transform="rotate(-25 675 560)"/><path d="M215,160 L215,390 L455,390 L400,318 C440,215 560,165 695,262 C640,60 400,10 282,218 Z" fill="none" stroke="#ffffff" stroke-width="26" stroke-linejoin="round"/><path d="M215,160 L215,390 L455,390 L400,318 C440,215 560,165 695,262 C640,60 400,10 282,218 Z" transform="rotate(180 465 345)" fill="none" stroke="#ffffff" stroke-width="26" stroke-linejoin="round"/><path d="M215,160 L215,390 L455,390 L400,318 C440,215 560,165 695,262 C640,60 400,10 282,218 Z" fill="url(#grf)" stroke="#5cb04a" stroke-width="7"/><path d="M215,160 L215,390 L455,390 L400,318 C440,215 560,165 695,262 C640,60 400,10 282,218 Z" transform="rotate(180 465 345)" fill="url(#grf)" stroke="#5cb04a" stroke-width="7"/></g>
<rect x="875.5" y="9.5" width="11" height="9" fill="none" stroke="#cfd6dc" stroke-width="1"/>
<path d="M875.5,11.5 L886.5,11.5 M881,17.5 L881,13.4 M878.8,15.2 L881,13 L883.2,15.2" fill="none" stroke="#cfd6dc" stroke-width="1"/>
<rect x="917" y="14.4" width="9" height="1" fill="#86b2dc"/>
<rect x="958.5" y="9.5" width="8" height="8" fill="none" stroke="#cfd6dc" stroke-width="1"/>
<path d="M999.5,9.4 L1007.7,17.6 M1007.7,9.4 L999.5,17.6" fill="none" stroke="#e4e8ec" stroke-width="1"/>
<rect x="752.6" y="30.6" width="11.6" height="10.8" fill="none" stroke="#5a5a60" stroke-width="1"/>
<line x1="759.3" y1="37.0" x2="765" y2="42.8" stroke="#9aa2ac" stroke-width="1.8" stroke-linecap="round"/><circle cx="756.9" cy="34.6" r="3.4" fill="url(#glens)" stroke="#b8d4f0" stroke-width="0.8"/>
<line x1="783.2" y1="36.8" x2="789" y2="42.8" stroke="#9aa2ac" stroke-width="1.8" stroke-linecap="round"/><circle cx="780.7" cy="34.3" r="3.6" fill="url(#glens)" stroke="#b8d4f0" stroke-width="0.8"/>
<rect x="778.6" y="32.8" width="4.6" height="4.2" fill="none" stroke="#70747c" stroke-width="0.8"/>
<line x1="807.8" y1="36.8" x2="813" y2="42.8" stroke="#9aa2ac" stroke-width="1.8" stroke-linecap="round"/><circle cx="805.3" cy="34.3" r="3.6" fill="url(#glens)" stroke="#b8d4f0" stroke-width="0.8"/>
<path d="M803.4,33 L807.2,33 L807.2,35.4 L805.6,35.4 L805.6,36.6" fill="none" stroke="#3a3a44" stroke-width="1"/>
<path d="M829.60,31 L829.60,41.8 M829.4,31.20 L840.4,31.20 M832.25,31 L832.25,41.8 M829.4,33.80 L840.4,33.80 M834.90,31 L834.90,41.8 M829.4,36.40 L840.4,36.40 M837.55,31 L837.55,41.8 M829.4,39.00 L840.4,39.00 M840.20,31 L840.20,41.8 M829.4,41.60 L840.4,41.60" stroke="#8c8c8c" stroke-width="0.9" fill="none"/>
<path d="M852.2,39.2 L863,29.9 M855.2,43.4 L866,32.6" stroke="#5a7ea8" stroke-width="0.9" fill="none"/>
<circle cx="856.6" cy="35.3" r="1.6" fill="none" stroke="#1c3a8a" stroke-width="0.9"/>
<circle cx="860.5" cy="37.9" r="1.9" fill="none" stroke="#1e2430" stroke-width="1.1"/>
<path d="M878.3,29.9 L878.3,43 M876,41.3 L889.8,41.3" stroke="#2a2e36" stroke-width="1.2" fill="none"/>
<circle cx="886.2" cy="33.6" r="1.9" fill="#2a6ad0" stroke="#1e2430" stroke-width="1"/>
<path d="M880.6,39.2 L884,35.9 M882,35.8 L884.1,35.8 L884.1,37.9" stroke="#9aa8b8" stroke-width="0.8" fill="none"/>
<path d="M900.6,29.8 L900.6,43.4 L914.4,43.4" stroke="#ffffff" stroke-width="1" stroke-dasharray="1 1" fill="none"/>
<path d="M901.6,41.6 L904.8,38.4 M901.6,39.6 L901.6,41.6 L903.6,41.6" stroke="#ffffff" stroke-width="0.8" fill="none"/>
<path d="M907.8,33.6 L907.8,32 A2.1,2.1 0 0 1 912,32 L912,33.6" fill="none" stroke="#e8c050" stroke-width="1.1"/>
<rect x="906.2" y="33.4" width="7.5" height="4.9" rx="0.6" fill="#f0c030" stroke="#c08a10" stroke-width="0.5"/>
<rect x="909.5" y="35" width="1" height="1.8" fill="#6a4a08"/>
<circle cx="935" cy="36.6" r="6.3" fill="url(#ggrn)" stroke="#c8ccd0" stroke-width="1"/>
<path d="M931.6,35.8 A3.5,3.5 0 0 1 937.8,34.4 L938.8,33.2 L939,36.6 L935.8,36.2 L936.8,35.2 A2.2,2.2 0 0 0 933,35.9 Z" fill="#ffffff"/>
<path d="M938.4,37.4 A3.5,3.5 0 0 1 932.2,38.8 L931.2,40 L931,36.6 L934.2,37 L933.2,38 A2.2,2.2 0 0 0 937,37.3 Z" fill="#ffffff"/>
<circle cx="963.3" cy="36.6" r="6.3" fill="url(#gblue)" stroke="#c4c8cc" stroke-width="1.1"/>
<text x="963.3" y="40.6" font-family="Liberation Sans, sans-serif" font-size="11" font-weight="bold" fill="#ffffff" text-anchor="middle">?</text>
<circle cx="987.2" cy="36.6" r="6.3" fill="url(#gblue)" stroke="#c4c8cc" stroke-width="1.1"/>
<text x="987.2" y="40.6" font-family="Liberation Serif, serif" font-size="11" font-weight="bold" fill="#ffffff" text-anchor="middle">i</text>
<circle cx="1011.2" cy="36.6" r="6.3" fill="url(#gred)" stroke="#c8a0a0" stroke-width="0.8"/>
<path d="M1008.4,33.8 L1014,39.4 M1014,33.8 L1008.4,39.4" stroke="#ffffff" stroke-width="2.2" stroke-linecap="round"/>
<path d="M1006,115 L1010,111 L1014,115 M1006,118.5 L1010,114.5 L1014,118.5" fill="none" stroke="#6a6a6a" stroke-width="1"/>
<path d="M1011.6,134.10000000000002 L1015,130.5 L1018.4,134.10000000000002" fill="none" stroke="#5a5a5a" stroke-width="1.3"/>
<path d="M1011.6,537.2 L1015,540.8 L1018.4,537.2" fill="none" stroke="#5a5a5a" stroke-width="1.3"/>
<path d="M9.4,549.6 L6,553 L9.4,556.4" fill="none" stroke="#5a5a5a" stroke-width="1.3"/>
<path d="M998.8,549.6 L1002.2,553 L998.8,556.4" fill="none" stroke="#5a5a5a" stroke-width="1.3"/>
<path d="M1008.5,551 L1009.5,551 L1009.5,557 L1008.5,557" fill="none" stroke="#c8c8c8" stroke-width="0.6"/>
<path d="M988.4,600.5 L988.4,604.8 M992,600.5 L992,604.8 M988.4,600.8 L992,600.8 M987,605 L993.2,605 M990.2,605 L990.2,608.4 M991.2,600.8 L991.2,604.8" fill="none" stroke="#3a3a3a" stroke-width="1"/>
<path d="M1003,600.5 L1009.8,607.5 M1009.8,600.5 L1003,607.5" fill="none" stroke="#3a3a3a" stroke-width="1.3"/>
<path d="M1009.0999999999999,628.5 L1012.3,625.0999999999999 L1015.5,628.5" fill="none" stroke="#5a5a5a" stroke-width="1.3"/>
<path d="M1009.0999999999999,644.9 L1012.3,648.3000000000001 L1015.5,644.9" fill="none" stroke="#5a5a5a" stroke-width="1.3"/>
<path d="M114.2,665.2 L119.8,665.2 L117,668.2 Z" fill="#606060"/>
<path d="M247.2,665.2 L252.8,665.2 L250,668.2 Z" fill="#606060"/>
<path d="M372.9,665.2 L378.5,665.2 L375.7,668.2 Z" fill="#606060"/>
<rect x="1018.9" y="664.9" width="1.3" height="1.3" fill="#6a6a6a"/><rect x="1016.4" y="667.4" width="1.3" height="1.3" fill="#6a6a6a"/><rect x="1018.9" y="667.4" width="1.3" height="1.3" fill="#6a6a6a"/><rect x="1013.9" y="669.9" width="1.3" height="1.3" fill="#6a6a6a"/><rect x="1016.4" y="669.9" width="1.3" height="1.3" fill="#6a6a6a"/><rect x="1018.9" y="669.9" width="1.3" height="1.3" fill="#6a6a6a"/><rect x="1011.4" y="672.4" width="1.3" height="1.3" fill="#6a6a6a"/><rect x="1013.9" y="672.4" width="1.3" height="1.3" fill="#6a6a6a"/><rect x="1016.4" y="672.4" width="1.3" height="1.3" fill="#6a6a6a"/>
</svg>
<span class="t" style="left:66.4px;top:32.4px;font-size:10.5px;line-height:10.5px;color:#ffffff;transform:scaleX(0.8876);">Architectural</span>
<span class="t" style="left:136.7px;top:32.4px;font-size:10.5px;line-height:10.5px;color:#ffffff;transform:scaleX(0.8902);">Drawing &amp; Annotation</span>
<span class="t" style="left:245.2px;top:32.4px;font-size:10.5px;line-height:10.5px;color:#ffffff;transform:scaleX(0.8542);">Non-Estimated Symbols</span>
<span class="t" style="left:360.0px;top:32.4px;font-size:10.5px;line-height:10.5px;color:#ffffff;transform:scaleX(0.8490);">Sections</span>
<span class="t" style="left:412.8px;top:32.4px;font-size:10.5px;line-height:10.5px;color:#ffffff;transform:scaleX(0.8670);">Modify &amp; Selection</span>
<span class="t" style="left:507.0px;top:32.4px;font-size:10.5px;line-height:10.5px;color:#ffffff;transform:scaleX(0.8374);">Views &amp; 3D</span>
<span class="t" style="left:570.2px;top:32.4px;font-size:10.5px;line-height:10.5px;color:#ffffff;transform:scaleX(0.8504);">Scan &amp; Trace</span>
<span class="t" style="left:641.7px;top:32.4px;font-size:10.5px;line-height:10.5px;color:#ffffff;transform:scaleX(0.8774);">Settings</span>
<span class="t" style="left:692.8px;top:32.4px;font-size:10.5px;line-height:10.5px;color:#404040;transform:scaleX(0.8523);">Level</span>
<span class="t" style="left:475.3px;top:7.9px;font-size:10.5px;line-height:10.5px;color:#ffffff;transform:scaleX(0.8436);">PlansXpress 2019</span>
<span class="t" style="left:692.8px;top:7.6px;font-size:10.5px;line-height:10.5px;color:#ffffff;transform:scaleX(0.8523);">Level</span>
<span class="t" style="left:9.7px;top:82.4px;font-size:10.5px;line-height:10.5px;color:#3c3c3c;transform:scaleX(0.8722);">Move Reference</span>
<span class="t" style="left:32.5px;top:93.2px;font-size:10.5px;line-height:10.5px;color:#3c3c3c;transform:scaleX(0.8898);">Point</span>
<span class="t" style="left:32.5px;top:111.0px;font-size:10.5px;line-height:10.5px;color:#3c3c3c;transform:scaleX(0.8642);">Level</span>
<span class="t" style="left:113.5px;top:58.9px;font-size:10.5px;line-height:10.5px;color:#3c3c3c;transform:scaleX(0.8750);">Intelli Trace On</span>
<span class="t" style="left:95.2px;top:84.2px;font-size:10.5px;line-height:10.5px;color:#3c3c3c;transform:scaleX(0.8591);">Direction</span>
<span class="t" style="left:139.7px;top:84.4px;font-size:10.5px;line-height:10.5px;color:#3c3c3c;transform:scaleX(0.8353);">Level Below</span>
<span class="t" style="left:237.5px;top:82.0px;font-size:10.5px;line-height:10.5px;color:#3c3c3c;transform:scaleX(0.8785);">Refresh</span>
<span class="t" style="left:158.6px;top:111.2px;font-size:10.5px;line-height:10.5px;color:#3c3c3c;transform:scaleX(0.8826);">Intelli Trace</span>
<span class="t" style="left:10.5px;top:562.2px;font-size:10.5px;line-height:10.5px;color:#3c3c3c;transform:scaleX(0.8847);">Complete Drawing 2 Storey House with apex roof and side extension 6.pxd</span>
<span class="t" style="left:337.5px;top:562.2px;font-size:10.5px;line-height:10.5px;color:#3c3c3c;transform:scaleX(0.8941);">Front Extension.pxd</span>
<span class="t" style="left:440.5px;top:562.2px;font-size:10.5px;line-height:10.5px;color:#3c3c3c;transform:scaleX(0.8634);">Drawing5</span>
<span class="t" style="left:14.0px;top:597.7px;font-size:13px;line-height:13px;color:#404040;transform:scaleX(0.9151);">Command Window</span>
<div class="a" style="left:0;top:620px;width:1004px;height:8.6px;overflow:hidden"><span class="t" style="left:6.6px;top:-4.3px;font-size:10.5px;line-height:10.5px;color:#8a8a8a;transform:scaleX(0.8689);">Select Command or Item(s) to Modify, Click &amp; Drag for Multiple Selection</span></div>
<div class="a" style="left:0;top:620px;width:1004px;height:8.6px;overflow:hidden"><span class="t" style="left:306.0px;top:-4.3px;font-size:10.5px;line-height:10.5px;color:#8a8a8a;transform:scaleX(0.9688);">**Cancel**</span></div>
<span class="t" style="left:6.6px;top:629.6px;font-size:10.5px;line-height:10.5px;color:#8a8a8a;transform:scaleX(0.8689);">Select Command or Item(s) to Modify, Click &amp; Drag for Multiple Selection</span>
<span class="t" style="left:306.0px;top:629.6px;font-size:10.5px;line-height:10.5px;color:#8a8a8a;transform:scaleX(0.9688);">**Cancel**</span>
<span class="t" style="left:6.6px;top:643.0px;font-size:10.5px;line-height:10.5px;color:#000000;transform:scaleX(0.8689);">Select Command or Item(s) to Modify, Click &amp; Drag for Multiple Selection</span>
<span class="t" style="left:5.5px;top:661.0px;font-size:10.5px;line-height:10.5px;color:#3c3c3c;transform:scaleX(0.8300);">Layer</span>
<span class="t" style="left:43.0px;top:661.0px;font-size:10.5px;line-height:10.5px;color:#3c3c3c;transform:scaleX(0.8564);">Levels</span>
<span class="t" style="left:134.8px;top:661.0px;font-size:10.5px;line-height:10.5px;color:#3c3c3c;transform:scaleX(0.8145);">Colour</span>
<span class="t" style="left:176.0px;top:661.0px;font-size:10.5px;line-height:10.5px;color:#3c3c3c;transform:scaleX(0.9137);">Layer</span>
<span class="t" style="left:267.0px;top:661.0px;font-size:10.5px;line-height:10.5px;color:#3c3c3c;transform:scaleX(0.8825);">Style</span>
<span class="t" style="left:302.8px;top:660.6px;font-size:10.5px;line-height:10.5px;color:#000;transform:scaleX(0.8719);">Layer</span>
<span class="t" style="left:393.5px;top:661.0px;font-size:10.5px;line-height:10.5px;color:#3c3c3c;transform:scaleX(0.8748);">Size: ISO A3 (420x297)</span>
<span class="t" style="left:502.5px;top:661.0px;font-size:10.5px;line-height:10.5px;color:#3c3c3c;transform:scaleX(0.8734);">Scale: 1:100</span>
<span class="t" style="left:566.5px;top:661.0px;font-size:10.5px;line-height:10.5px;color:#3c3c3c;transform:scaleX(0.8466);">Units: mm</span>
<span class="t" style="left:620.5px;top:661.0px;font-size:10.5px;line-height:10.5px;color:#3c3c3c;transform:scaleX(0.8747);">19422, 31190</span>
</body></html>
